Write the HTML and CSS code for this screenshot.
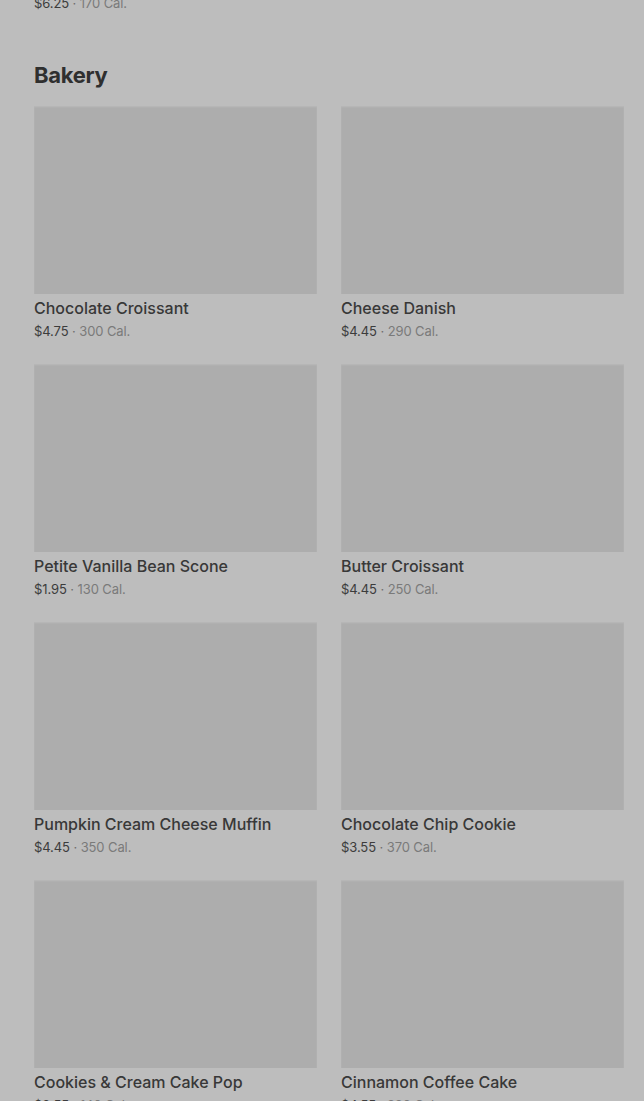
FILE: index.html
```html
<!DOCTYPE html>
<html lang="en-US">
<head>
	<title>Menu - Bakery</title>
	<link rel="stylesheet" href="styles.css">
</head>
<body>
	<div class="menu">
		<div class="meta prev"><span class="price">$6.25</span> &middot; <span class="cal">170 Cal.</span></div>

		<h2 class="section-title">Bakery</h2>
		<div class="grid">
			<div class="item">
				<div class="thumb"></div>
				<div class="name">Chocolate Croissant</div>
				<div class="meta"><span class="price">$4.75</span> &middot; <span class="cal">300 Cal.</span></div>
			</div>
			<div class="item">
				<div class="thumb"></div>
				<div class="name">Cheese Danish</div>
				<div class="meta"><span class="price">$4.45</span> &middot; <span class="cal">290 Cal.</span></div>
			</div>
			<div class="item">
				<div class="thumb"></div>
				<div class="name">Petite Vanilla Bean Scone</div>
				<div class="meta"><span class="price">$1.95</span> &middot; <span class="cal">130 Cal.</span></div>
			</div>
			<div class="item">
				<div class="thumb"></div>
				<div class="name">Butter Croissant</div>
				<div class="meta"><span class="price">$4.45</span> &middot; <span class="cal">250 Cal.</span></div>
			</div>
			<div class="item">
				<div class="thumb"></div>
				<div class="name">Pumpkin Cream Cheese Muffin</div>
				<div class="meta"><span class="price">$4.45</span> &middot; <span class="cal">350 Cal.</span></div>
			</div>
			<div class="item">
				<div class="thumb"></div>
				<div class="name">Chocolate Chip Cookie</div>
				<div class="meta"><span class="price">$3.55</span> &middot; <span class="cal">370 Cal.</span></div>
			</div>
			<div class="item">
				<div class="thumb"></div>
				<div class="name">Cookies &amp; Cream Cake Pop</div>
				<div class="meta"><span class="price">$2.55</span> &middot; <span class="cal">140 Cal.</span></div>
			</div>
			<div class="item">
				<div class="thumb"></div>
				<div class="name">Cinnamon Coffee Cake</div>
				<div class="meta"><span class="price">$4.55</span> &middot; <span class="cal">380 Cal.</span></div>
			</div>
		</div>
	</div>
</body>
</html>
```

FILE: styles.css
```css
html, body {
	margin: 0;
	background: #bdbdbd;
	font-family: Inter, "Noto Sans", sans-serif;
	overflow: hidden;
}

div.menu {
	padding: 0 20px 0 34px;
}

h2.section-title {
	margin: 49px 0 17px;
	font-size: 22px;
	line-height: 28px;
	font-weight: 700;
	color: #2f2f2f;
	letter-spacing: -0.3px;
}

div.grid {
	display: grid;
	grid-template-columns: 283px 283px;
	column-gap: 24px;
	row-gap: 24px;
}

div.thumb {
	height: 188px;
	background: #adadad;
	box-shadow: inset 0 1px 2px rgba(255,255,255,0.15);
}

div.name {
	margin-top: 3px;
	font-size: 16px;
	line-height: 22px;
	font-weight: 500;
	color: #383838;
}

div.meta {
	margin-top: 3px;
	font-size: 13px;
	line-height: 18px;
	letter-spacing: -0.1px;
	color: #6e6e6e;
}

div.meta.prev {
	margin-top: -6px;
}

div.meta .price {
	color: #3c3c3c;
}

div.meta .cal {
	color: #7a7a7a;
}
```
